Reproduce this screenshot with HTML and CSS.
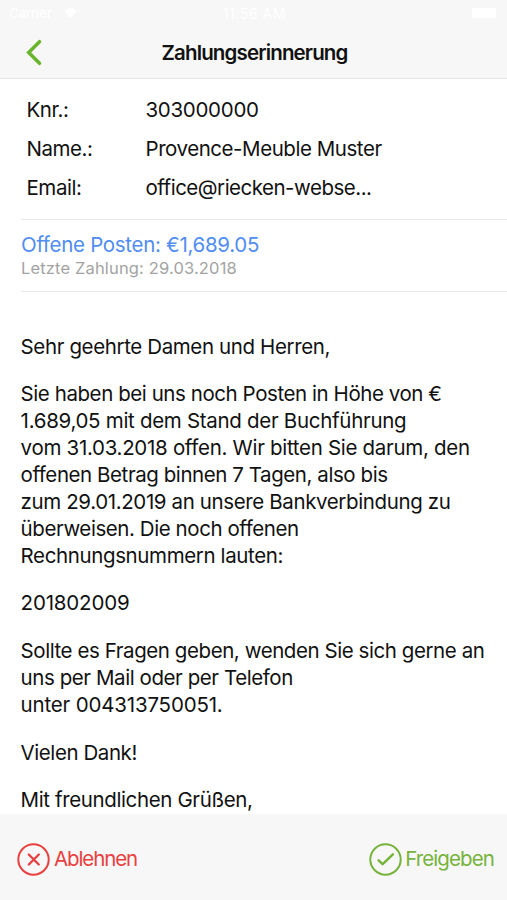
FILE: index.html
```html
<!DOCTYPE html>
<html lang="de">
<head>
<meta charset="utf-8">
<title>Zahlungserinnerung</title>
<link rel="stylesheet" href="styles.css">
</head>
<body>
<div class="screen">
  <header class="top">
    <div class="status"><span class="carrier">Carrier <svg width="13" height="10" viewBox="0 0 13 10"><path d="M0 3Q6.500-3 13 3L6.500 10Z" fill="currentColor"/></svg></span><span class="clock">11:56 AM</span><span class="battery"></span></div>
    <div class="nav">
      <svg class="back" width="18" height="28" viewBox="0 0 18 28"><path d="M14.500 3.700L3.700 14.500L14.500 25.300" fill="none" stroke="currentColor" stroke-width="3.500" stroke-linecap="round" stroke-linejoin="miter"/></svg>
      <h1>Zahlungserinnerung</h1>
    </div>
  </header>
  <main>
    <dl class="details">
      <dt>Knr.:</dt><dd class="number">303000000</dd>
      <dt>Name.:</dt><dd>Provence-Meuble Muster</dd>
      <dt>Email:</dt><dd class="mail">office@riecken-webse...</dd>
    </dl>
    <section class="open">
      <div class="amount">Offene Posten: €1,689.05</div>
      <div class="last">Letzte Zahlung: 29.03.2018</div>
    </section>
    <article class="letter">
      <p>Sehr geehrte Damen und Herren,</p>
      <p><span class="tight">Sie haben bei uns noch Posten in Höhe von €</span><br><span class="wide">1.689,05 mit dem Stand der Buchführung</span><br><span class="wide">vom 31.03.2018 offen. Wir bitten Sie darum, den</span><br><span class="tight">offenen Betrag binnen 7 Tagen, also bis</span><br>zum 29.01.2019 an unsere Bankverbindung zu<br><span class="tight">überweisen. Die noch offenen</span><br>Rechnungsnummern lauten:</p>
      <p class="number">201802009</p>
      <p><span class="tight">Sollte es Fragen geben, wenden Sie sich gerne an</span><br><span class="tight">uns per Mail oder per Telefon</span><br><span class="number">unter 004313750051.</span></p>
      <p class="tight">Vielen Dank!</p>
      <p>Mit freundlichen Grüßen,</p>
    </article>
  </main>
  <footer class="actions">
    <button class="reject"><svg width="33" height="33" viewBox="0 0 33 33" fill="none" stroke="currentColor" stroke-width="2"><circle cx="16.500" cy="16.500" r="15.200"/><path d="M11.800 11.500L21.800 21.500M21.800 11.500L11.800 21.500" stroke-width="2.300" stroke-linecap="round"/></svg><span>Ablehnen</span></button>
    <button class="approve"><svg width="33" height="33" viewBox="0 0 33 33" fill="none" stroke="currentColor" stroke-width="2"><circle cx="16.500" cy="16.500" r="15.200"/><path d="M9.600 17.300L13.600 21.100L23.900 11.300" stroke-width="2.500" stroke-linecap="round" stroke-linejoin="round"/></svg><span>Freigeben</span></button>
  </footer>
</div>
</body>
</html>
```
FILE: styles.css
```css
* { box-sizing: border-box; }
body { margin: 0; background: #fff; color: #111; font-family: Inter, "Liberation Sans", sans-serif; }
.screen { width: 507px; height: 900px; display: flex; flex-direction: column; overflow: hidden; }
.top { flex: 0 0 79px; background: #f7f7f7; border-bottom: 1px solid #e4e4e4; }
.status { height: 26px; padding: 0 11px 0 9px; display: grid; grid-template-columns: 1fr auto 1fr; align-items: center; color: #fff; font-size: 13px; }
.carrier svg { margin-left: 9px; }
.clock { padding-left: 4px; font-size: 14px; letter-spacing: 0.5px; }
.battery { width: 24px; height: 10px; background: #fff; justify-self: end; }
.nav { height: 52px; display: grid; grid-template-columns: 60px 1fr 58px; align-items: center; }
.back { margin-left: 25px; color: #6ab42d; }
h1 { margin: 1px 0 0; text-align: center; font-size: 20.5px; font-weight: 600; letter-spacing: -0.85px; }
main { flex: 1; min-height: 0; overflow: hidden; }
.details { margin: 0; padding: 11px 0 12px 26.5px; display: grid; grid-template-columns: 119px 1fr; grid-auto-rows: 39px; align-items: center; font-size: 20.5px; letter-spacing: -0.45px; }
dd { margin: 0; }
.mail { letter-spacing: -0.5px; }
.open { margin-left: 21px; height: 73px; padding-top: 12px; border-top: 1px solid #e8e8e8; border-bottom: 1px solid #e8e8e8; }
.amount { font-size: 20.5px; line-height: 26px; letter-spacing: -0.3px; color: #508df2; }
.last { font-size: 16.5px; line-height: 21px; letter-spacing: 0.15px; color: #a3a3a3; }
.letter { padding: 41.6px 0 0 20.6px; font-size: 20.5px; line-height: 26.9px; letter-spacing: -0.38px; white-space: nowrap; }
.letter p { margin: 0 0 20.800px; }
.number { letter-spacing: -0.3px; }
.letter .number { letter-spacing: -0.18px; }
.tight { letter-spacing: -0.43px; }
.wide { letter-spacing: -0.3px; }
.actions { flex: 0 0 86px; padding: 4px 13px 0 17px; display: flex; justify-content: space-between; align-items: center; background: #f7f7f7; }
button { display: flex; align-items: center; gap: 4px; padding: 0; border: 0; background: none; font: inherit; font-size: 20.5px; letter-spacing: -1.1px; }
button span { margin-top: -2px; }
.reject { color: #e9403f; }
.approve { gap: 3px; color: #76b33b; letter-spacing: -0.9px; }
```
